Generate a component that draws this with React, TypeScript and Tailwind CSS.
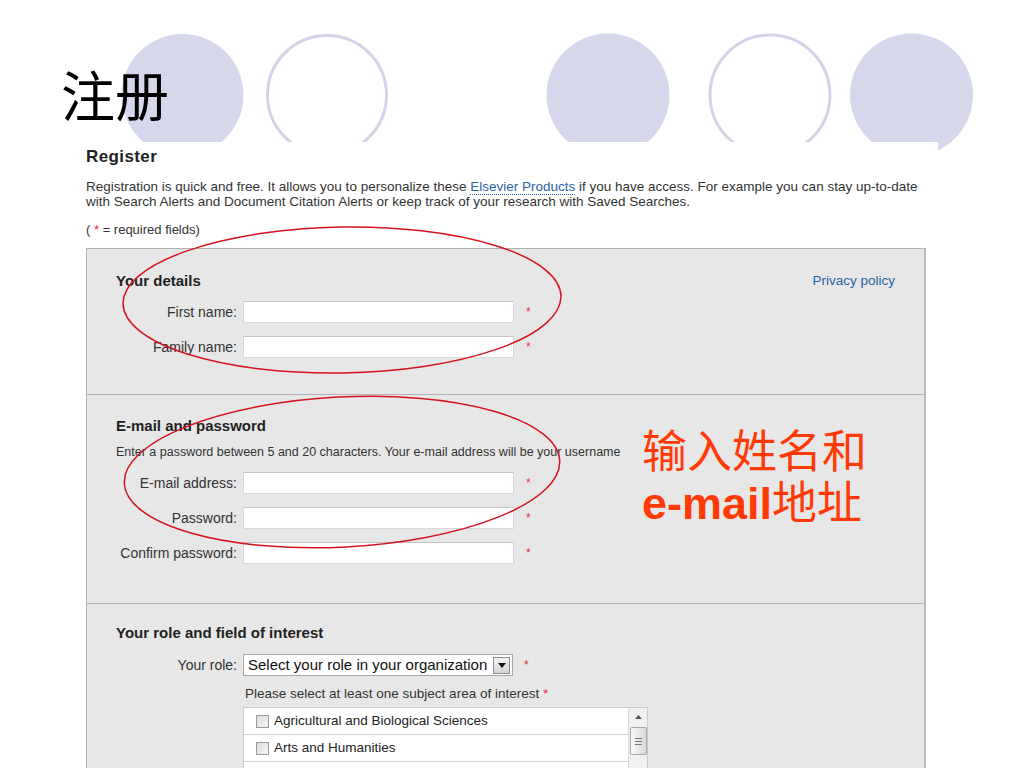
import React from "react";

const circles = [
  { cx: 182.5, r: 61, filled: true },
  { cx: 327, r: 61, filled: false },
  { cx: 608, r: 61.5, filled: true },
  { cx: 770, r: 61.5, filled: false },
  { cx: 911.5, r: 61.5, filled: true },
];

function FieldRow({ label, required = true }: { label: string; required?: boolean }) {
  return (
    <div className="flex items-center h-[22px]">
      <div className="w-[121px] text-right text-[14px] leading-[16px] text-[#333] whitespace-nowrap">{label}</div>
      <div className="ml-[6px] w-[271px] h-[22px] bg-white border border-[#d8d8d8] border-t-[#c4c4c4]" />
      {required && <span className="ml-[12px] text-[12px] text-[#e0303a]">*</span>}
    </div>
  );
}

function SubjectRow({ label }: { label?: string }) {
  return (
    <div className="flex items-center h-[27px] border-b border-[#cfcfcf] pl-[12px]">
      {label && (
        <>
          <span className="w-[13px] h-[13px] border border-[#9a9a9a] bg-gradient-to-br from-[#dcdcdc] to-[#f6f6f6]" />
          <span className="ml-[5px] text-[13.5px] leading-[16px] text-[#222]">{label}</span>
        </>
      )}
    </div>
  );
}

export default function App() {
  return (
    <div className="relative w-[1024px] h-[768px] overflow-hidden bg-white font-['Liberation_Sans',Arial,sans-serif]">
      {/* slide decoration */}
      <svg className="absolute left-0 top-0" width="1024" height="170" viewBox="0 0 1024 170">
        {circles.map((c, i) =>
          c.filled ? (
            <circle key={i} cx={c.cx} cy={95} r={c.r} fill="#d7d7eb" />
          ) : (
            <circle key={i} cx={c.cx} cy={95} r={c.r - 1.5} fill="white" stroke="#d3d3e7" strokeWidth="3" />
          )
        )}
      </svg>

      <div className="relative h-[142px] pl-[61px] pt-[67px]">
        <h1 className="text-[54px] leading-none text-black font-['Noto_Sans_CJK_SC',sans-serif]">注册</h1>
      </div>

      {/* pasted screenshot */}
      <div className="relative z-10 ml-[80px] w-[858px] h-[626px] bg-white pl-[6px] text-[#333]">
        <h2 className="pt-[6px] text-[17px] leading-[18px] tracking-[0.4px] font-bold text-[#222]">Register</h2>
        <p className="mt-[13px] text-[13.5px] leading-[15px] text-[#333] w-[840px]">
          Registration is quick and free. It allows you to personalize these{" "}
          <span className="text-[#2a64a8] border-b border-dotted border-[#2a64a8]">Elsevier Products</span> if you have
          access. For example you can stay up-to-date with Search Alerts and Document Citation Alerts or keep track of
          your research with Saved Searches.
        </p>
        <p className="mt-[13px] text-[13px] leading-[15px]">
          ( <span className="text-[#e0303a]">*</span> = required fields)
        </p>

        <div className="mt-[11px] w-[840px] border border-[#b3b3b3] border-r-2 border-r-[#bdbdbd] bg-[#e7e7e7]">
          <section className="h-[146px] border-b border-[#b3b3b3] pl-[29px] pr-[29px] pt-[24px]">
            <div className="flex justify-between items-center h-[16px]">
              <h3 className="text-[15px] font-bold text-[#222]">Your details</h3>
              <span className="text-[13.5px] text-[#2a64a8]">Privacy policy</span>
            </div>
            <div className="mt-[12px] flex flex-col gap-[13px]">
              <FieldRow label="First name:" />
              <FieldRow label="Family name:" />
            </div>
          </section>

          <section className="h-[209px] border-b border-[#b3b3b3] pl-[29px] pt-[23px]">
            <h3 className="text-[15px] leading-[16px] font-bold text-[#222]">E-mail and password</h3>
            <p className="mt-[11px] text-[12.5px] leading-[14px] text-[#333]">
              Enter a password between 5 and 20 characters. Your e-mail address will be your username
            </p>
            <div className="mt-[13px] flex flex-col gap-[13px]">
              <FieldRow label="E-mail address:" />
              <FieldRow label="Password:" />
              <FieldRow label="Confirm password:" />
            </div>
          </section>

          <section className="h-[200px] pl-[29px] pt-[21px]">
            <h3 className="text-[15px] leading-[16px] font-bold text-[#222]">Your role and field of interest</h3>
            <div className="mt-[13px] flex items-center h-[22px]">
              <div className="w-[121px] text-right text-[14px] text-[#333]">Your role:</div>
              <div className="ml-[6px] w-[270px] h-[22px] flex items-center justify-between bg-white border border-[#a8a8a8] pl-[4px] pr-[2px]">
                <span className="text-[15px] leading-[16px] text-[#111] whitespace-nowrap">Select your role in your organization</span>
                <span className="w-[17px] h-[17px] flex items-center justify-center border border-[#8d8d8d] bg-gradient-to-b from-[#f4f4f4] to-[#d4d4d4]">
                  <svg width="8" height="5" viewBox="0 0 8 5">
                    <path d="M0 0H8L4 5Z" fill="#111" />
                  </svg>
                </span>
              </div>
              <span className="ml-[11px] text-[12px] text-[#e0303a]">*</span>
            </div>
            <p className="mt-[11px] ml-[129px] text-[13.5px] leading-[14px] text-[#333]">
              Please select at least one subject area of interest <span className="text-[#e0303a]">*</span>
            </p>
            <div className="mt-[6px] ml-[127px] w-[405px] flex border border-[#c9c9c9] bg-white">
              <div className="w-[385px]">
                <SubjectRow label="Agricultural and Biological Sciences" />
                <SubjectRow label="Arts and Humanities" />
                <SubjectRow />
              </div>
              <div className="w-[19px] bg-[#f0f0f0] border-l border-[#dadada] flex flex-col items-center">
                <svg className="mt-[7px]" width="7" height="4" viewBox="0 0 7 4">
                  <path d="M0 4L3.5 0L7 4Z" fill="#555" />
                </svg>
                <div className="mt-[8px] w-[17px] h-[28px] rounded-[2px] border border-[#a9a9a9] bg-gradient-to-r from-[#f8f8f8] to-[#d9d9d9] flex flex-col items-center justify-center gap-[2px]">
                  <span className="w-[7px] h-px bg-[#777]" />
                  <span className="w-[7px] h-px bg-[#777]" />
                  <span className="w-[7px] h-px bg-[#777]" />
                </div>
              </div>
            </div>
          </section>
        </div>
      </div>

      {/* annotation text */}
      <div className="absolute z-20 left-[642px] top-[423px] text-[#ff3a06] text-[45px] leading-[51px] font-['Noto_Sans_CJK_SC',sans-serif]">
        <div>输入姓名和</div>
        <div>
          <span className="font-['Liberation_Sans',Arial,sans-serif] font-bold">e-mail</span>地址
        </div>
      </div>

      {/* annotation ellipses */}
      <svg className="absolute left-0 top-0 z-30 pointer-events-none" width="1024" height="768" viewBox="0 0 1024 768">
        <ellipse cx="342" cy="300" rx="219" ry="73" fill="none" stroke="#d4141c" strokeWidth="1.5" transform="rotate(-1 342 300)" />
        <ellipse cx="342" cy="472" rx="218" ry="75" fill="none" stroke="#d4141c" strokeWidth="1.5" transform="rotate(-3 342 472)" />
      </svg>
    </div>
  );
}
